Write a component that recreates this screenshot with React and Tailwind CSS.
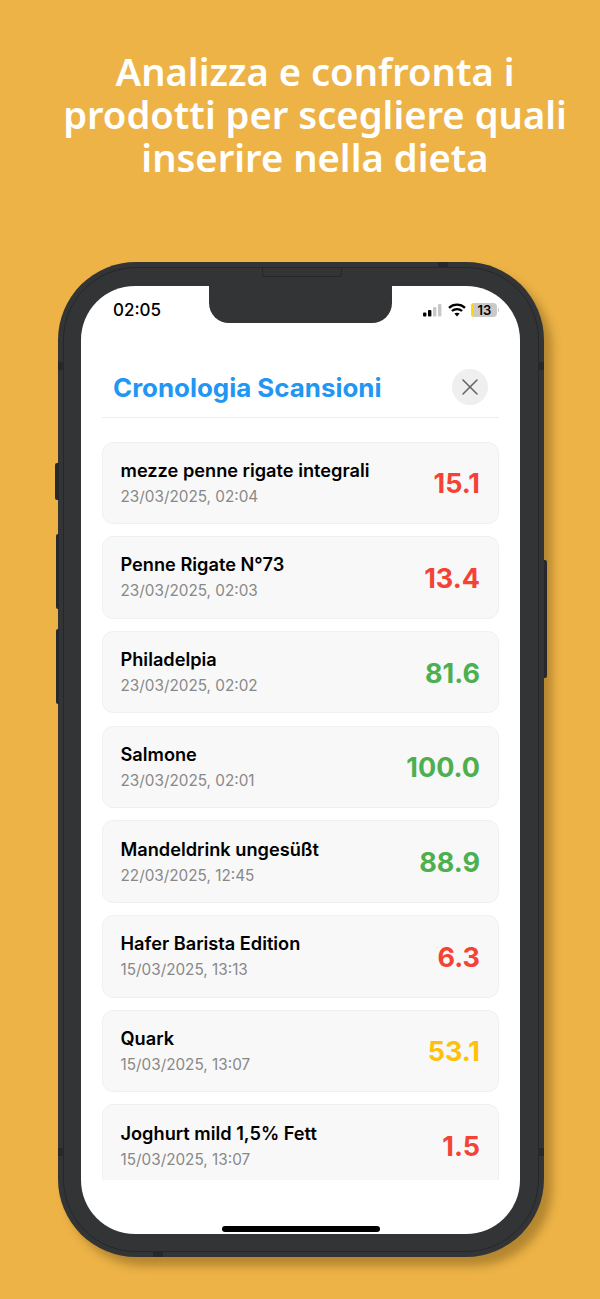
import { X } from "lucide-react";

const scans = [
  { name: "mezze penne rigate integrali", date: "23/03/2025, 02:04", score: "15.1", color: "text-[#f44336]" },
  { name: "Penne Rigate N°73", date: "23/03/2025, 02:03", score: "13.4", color: "text-[#f44336]" },
  { name: "Philadelpia", date: "23/03/2025, 02:02", score: "81.6", color: "text-[#4caf50]" },
  { name: "Salmone", date: "23/03/2025, 02:01", score: "100.0", color: "text-[#4caf50]" },
  { name: "Mandeldrink ungesüßt", date: "22/03/2025, 12:45", score: "88.9", color: "text-[#4caf50]" },
  { name: "Hafer Barista Edition", date: "15/03/2025, 13:13", score: "6.3", color: "text-[#f44336]" },
  { name: "Quark", date: "15/03/2025, 13:07", score: "53.1", color: "text-[#ffc107]" },
  { name: "Joghurt mild 1,5% Fett", date: "15/03/2025, 13:07", score: "1.5", color: "text-[#f44336]" },
];

function StatusIcons() {
  return (
    <div className="flex items-center gap-[5px]">
      <svg width="20" height="13" viewBox="0 0 20 13">
        <rect x="0" y="8.5" width="3.4" height="4" rx="1" fill="#000" />
        <rect x="5" y="6" width="3.4" height="6.5" rx="1" fill="#000" />
        <rect x="10" y="3" width="3.4" height="9.5" rx="1" fill="#c8c8c8" />
        <rect x="15" y="0" width="3.4" height="12.5" rx="1" fill="#c8c8c8" />
      </svg>
      <svg width="18" height="14" viewBox="0 0 18 14" fill="none" stroke="#000" strokeWidth="2.3">
        <path d="M1 4.8C5.6 .6 12.4 .6 17 4.8" />
        <path d="M3.9 8c2.9-2.6 7.3-2.6 10.2 0" />
        <path d="M9 13.6l-2.6-3c1.5-1.2 3.7-1.2 5.2 0z" fill="#000" stroke="none" />
      </svg>
      <div className="flex items-center">
        <div className="relative flex h-[14px] w-[26px] items-center justify-center rounded-[4px] bg-[#c9c9c9]">
          <div className="absolute inset-y-0 left-0 w-[3px] rounded-l-[3px] bg-[#ffd60a]" />
          <span className="relative pl-[1px] text-[13px] font-semibold leading-[14px] text-black">13</span>
        </div>
        <div className="ml-px h-[4px] w-px rounded-r bg-[#c9c9c9]" />
      </div>
    </div>
  );
}

function ScanCard({ scan }) {
  return (
    <div className="flex h-[82.6px] shrink-0 items-center justify-between rounded-[11px] border border-[#f0f0f0] bg-[#f8f8f8] pl-[17.5px] pr-[18px]">
      <div className="flex flex-col">
        <span className="text-[18.2px] font-semibold leading-[22px] text-black">{scan.name}</span>
        <span className="mt-[6px] text-[15.3px] leading-[20px] text-[#888]">{scan.date}</span>
      </div>
      <span className={`pt-[2px] text-[27px] font-bold leading-none ${scan.color}`}>{scan.score}</span>
    </div>
  );
}

export default function App() {
  return (
    <div className="h-[1299px] w-[600px] overflow-hidden bg-[#edb347] font-['Inter',sans-serif]">
      <h1 className="pl-[30px] pt-[50px] text-center font-['Noto_Sans',sans-serif] text-[38.2px] font-semibold leading-[43px] text-white">
        Analizza e confronta i<br />
        prodotti per scegliere quali<br />
        inserire nella dieta
      </h1>

      <div className="relative ml-[58px] mt-[83px] h-[995px] w-[486px] rounded-[78px] bg-[#333435] px-[23px] pt-[24px] shadow-[8px_9px_10px_rgba(110,80,20,0.45)]">
        {/* inner bezel line */}
        <div className="absolute inset-[5px] rounded-[73px] border border-[#26272a]" />

        {/* side buttons */}
        <div className="absolute left-[-3.5px] top-[201px] h-[37px] w-[4px] rounded-l-[2px] bg-[#26282b]" />
        <div className="absolute left-[-2.5px] top-[272px] h-[75px] w-[3px] rounded-l-[2px] bg-[#26282b]" />
        <div className="absolute left-[-2.5px] top-[367px] h-[75px] w-[3px] rounded-l-[2px] bg-[#26282b]" />
        <div className="absolute right-[-2.5px] top-[298px] h-[118px] w-[3px] rounded-r-[2px] bg-[#26282b]" />

        {/* antenna bands */}
        <div className="absolute left-0 top-[100px] h-[8px] w-[6px] bg-[#26282b]" />
        <div className="absolute right-0 top-[100px] h-[8px] w-[6px] bg-[#26282b]" />
        <div className="absolute left-0 top-[886px] h-[8px] w-[6px] bg-[#26282b]" />
        <div className="absolute right-0 top-[886px] h-[8px] w-[6px] bg-[#26282b]" />
        <div className="absolute left-[380px] top-0 h-[6px] w-[10px] bg-[#26282b]" />
        <div className="absolute bottom-0 left-[95px] h-[6px] w-[10px] bg-[#26282b]" />

        {/* speaker */}
        <div className="absolute left-[204px] top-[6px] z-10 h-[9px] w-[80px] rounded-b-[3px] border border-t-0 border-[#26272a]" />

        <div className="relative flex h-[948px] w-[439px] flex-col overflow-hidden rounded-[54px] bg-white">
          {/* notch */}
          <div className="absolute left-[128px] top-0 h-[37px] w-[183px] rounded-b-[20px] bg-[#333435]" />

          <div className="flex items-center justify-between pl-[32px] pr-[21px] pt-[14px]">
            <span className="text-[17px] font-medium leading-[20px] text-black">02:05</span>
            <StatusIcons />
          </div>

          <div className="mx-[21px] mt-[36px] flex h-[62px] shrink-0 items-center justify-between border-b border-[#eeeeee] pl-[11px] pr-[11px] pt-[3px]">
            <span className="text-[25.9px] font-bold text-[#2196f3]">Cronologia Scansioni</span>
            <div className="-mt-[2px] flex h-[36px] w-[36px] items-center justify-center rounded-full bg-[#efefef]">
              <X size={28} strokeWidth={1.3} color="#666" />
            </div>
          </div>

          <div className="mx-[21px] mt-[23.5px] flex h-[738px] flex-col gap-[12.1px] overflow-hidden">
            {scans.map((scan) => (
              <ScanCard key={scan.name} scan={scan} />
            ))}
          </div>

          {/* home indicator */}
          <div className="mx-auto mt-[46.5px] h-[6px] w-[158px] rounded-full bg-black" />
        </div>
      </div>
    </div>
  );
}
